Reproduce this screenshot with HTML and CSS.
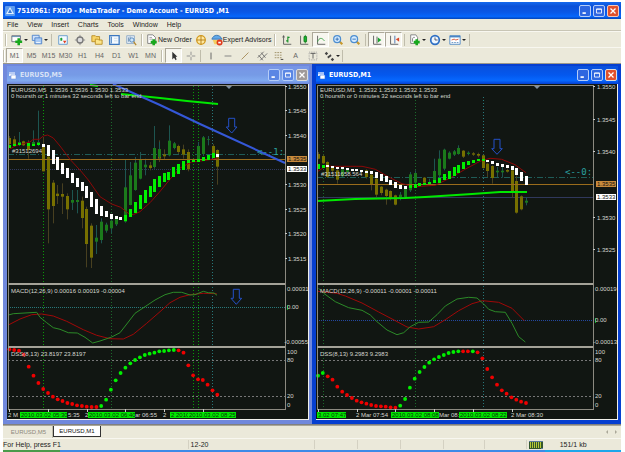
FILE: index.html
```html
<!DOCTYPE html>
<html lang="en">
<head>
<meta charset="utf-8">
<title>MetaTrader</title>
<link rel="stylesheet" href="styles.css">
</head>
<body>
<div class="app">
  <header class="titlebar">
    <svg class="logo" viewBox="0 0 10 10"><rect width="10" height="10" rx="1" fill="#5d9cf0"/><path d="M5 1L9 8H1Z" fill="#dff0ff"/><path d="M5 3L7 7H3Z" fill="#3a78d8"/></svg>
    <h1>7510961: FXDD - MetaTrader - Demo Account - EURUSD ,M1</h1>
    <div class="winbtns">
      <button aria-label="Minimize"><svg viewBox="0 0 12 12"><path d="M3 8.500h4" stroke="#fff" stroke-width="2"/></svg></button>
      <button aria-label="Restore"><svg viewBox="0 0 12 12"><path d="M3 3.500h6v5H3zM3 4h6" stroke="#fff" fill="none"/></svg></button>
      <button class="close" aria-label="Close"><svg viewBox="0 0 12 12"><path d="M3 3l6 6M9 3l-6 6" stroke="#fff" stroke-width="1.500"/></svg></button>
    </div>
  </header>
  <nav class="menu">
    <button>File</button><button>View</button><button>Insert</button><button>Charts</button><button>Tools</button><button>Window</button><button>Help</button>
  </nav>
  <div class="toolbar">
    <i class="grip"></i>
    <button class="drop" aria-label="New chart"><svg viewBox="0 0 14 14"><path d="M1 2h10v7H1z" fill="#fff" stroke="#667"/><path d="M1 3h10" stroke="#58a"/><path d="M9 5v8M5 9h8" stroke="#17a81c" stroke-width="3"/></svg></button>
    <button class="drop" aria-label="Profiles"><svg viewBox="0 0 14 14"><path d="M1.500 1.500h8v6h-8z" fill="#cfe2fa" stroke="#4a7fc8"/><path d="M4.500 4.500h8v7h-8z" fill="#a9cbf5" stroke="#4a7fc8"/><path d="M6 10h5" stroke="#fff"/></svg></button>
    <i class="sep"></i>
    <button aria-label="Market watch"><svg viewBox="0 0 14 14"><path d="M2 2h10v10H2z" fill="#f4faff" stroke="#5a93cc"/><path d="M3 6l2-2 2 2zM4 6h2v2H4z" fill="#18a030"/><path d="M7 8h4l-2 3z" fill="#e04020"/></svg></button>
    <button aria-label="Data window"><svg viewBox="0 0 14 14"><path d="M7 1v12M1 7h12" stroke="#888"/><circle cx="7" cy="7" r="3.500" fill="#ddd" stroke="#777" stroke-width="1.500"/></svg></button>
    <button aria-label="Navigator"><svg viewBox="0 0 14 14"><path d="M1 2h4l1 1h4v6H1z" fill="#f8d568" stroke="#b68a20"/><path d="M5 6h3l1 1h4v5H5z" fill="#fce58a" stroke="#b68a20"/></svg></button>
    <button aria-label="Terminal"><svg viewBox="0 0 14 14"><path d="M2 2h11v10H2z" fill="#f4faff" stroke="#3c78c0" stroke-width="1.500"/><path d="M4 3v8" stroke="#3c78c0"/><path d="M7 5h4M7 8h4" stroke="#c9d8e8"/></svg></button>
    <button aria-label="Strategy tester"><svg viewBox="0 0 14 14"><path d="M2 2h9v9H2z" fill="#e6eff8" stroke="#8ba7c4"/><path d="M4 4v5M6 3v6" stroke="#68a"/><circle cx="8" cy="7" r="2.500" fill="#cfe6fa" stroke="#4a80b8"/><path d="M10 9l3 4" stroke="#b78a30" stroke-width="1.500"/></svg></button>
    <i class="grip"></i>
    <button class="wide"><svg viewBox="0 0 14 14"><path d="M2 1h6l3 3v7H2z" fill="#fff" stroke="#777"/><path d="M4 4h3M4 6h4" stroke="#999"/><path d="M9 6v7M5.500 9.500h7" stroke="#17a81c" stroke-width="3"/></svg>New Order</button>
    <button aria-label="MetaEditor"><svg viewBox="0 0 14 14"><circle cx="7" cy="7" r="5" fill="#ffe9a0" stroke="#d39a20" stroke-width="1.500"/><path d="M7 2v10M2 7h10" stroke="#b07810"/></svg></button>
    <button class="wide"><svg viewBox="0 0 14 14"><path d="M1 6c2-6 9-6 12 0z" fill="#61a8e8" stroke="#3471b0"/><path d="M2 7h9l-2 5H4z" fill="#f4cf62"/><circle cx="10" cy="10" r="3.500" fill="#e03a1c"/><path d="M8.500 9h3v2h-3z" fill="#fff"/></svg>Expert Advisors</button>
    <i class="grip"></i>
    <button aria-label="Bar chart"><svg viewBox="0 0 14 14"><path d="M3 2v10h9M3 2L2 4M3 2l1 2" stroke="#555" fill="none"/><path d="M8 3v7M8 4h2M6 8h2" stroke="#189028" stroke-width="1.300"/></svg></button>
    <button aria-label="Candlesticks"><svg viewBox="0 0 14 14"><path d="M3 2v10h9" stroke="#555" fill="none"/><path d="M8.500 1v10" stroke="#189028"/><path d="M7 3h3v6H7z" fill="#19b62c" stroke="#117a1c"/></svg></button>
    <button class="on" aria-label="Line chart"><svg viewBox="0 0 14 14"><path d="M3 2v10h9" stroke="#555" fill="none"/><path d="M3 9c2-5 5-5 8-1" stroke="#2e9c3c" fill="none"/></svg></button>
    <button aria-label="Zoom in"><svg viewBox="0 0 14 14"><path d="M8 8l4 4" stroke="#c8992c" stroke-width="2.500"/><circle cx="6" cy="6" r="4" fill="#d4ebff" stroke="#4d8ed0" stroke-width="1.500"/><path d="M4 6h4M6 4v4" stroke="#2a68b0"/></svg></button>
    <button aria-label="Zoom out"><svg viewBox="0 0 14 14"><path d="M8 8l4 4" stroke="#c8992c" stroke-width="2.500"/><circle cx="6" cy="6" r="4" fill="#d4ebff" stroke="#4d8ed0" stroke-width="1.500"/><path d="M4 6h4" stroke="#2a68b0"/></svg></button>
    <i class="sep"></i>
    <button class="on" aria-label="Auto scroll"><svg viewBox="0 0 14 14"><path d="M3 2v10h9M7 3v8" stroke="#555" fill="none"/><path d="M8 4l4 3-4 3z" fill="#19a32c"/></svg></button>
    <button class="on" aria-label="Chart shift"><svg viewBox="0 0 14 14"><path d="M3 2v10h9" stroke="#555" fill="none"/><path d="M8 2v9" stroke="#3a6bb0"/><path d="M13 4L9 6l4 3z" fill="#d8482a"/></svg></button>
    <i class="sep"></i>
    <button class="drop" aria-label="Indicators"><svg viewBox="0 0 14 14"><path d="M2 1h6l2 3v7H2z" fill="#fff" stroke="#777"/><path d="M4 9c0-6 1-5 3-5" stroke="#777" fill="none"/><path d="M9 6v7M5.500 9.500h7" stroke="#17a81c" stroke-width="3"/></svg></button>
    <button class="drop" aria-label="Periods"><svg viewBox="0 0 14 14"><circle cx="7" cy="7" r="5" fill="#eef7ff" stroke="#2e6fc4" stroke-width="2"/><path d="M7 4v3h3" stroke="#445" fill="none"/></svg></button>
    <button class="drop" aria-label="Templates"><svg viewBox="0 0 14 14"><path d="M1 2h12v10H1z" fill="#fff" stroke="#4a85c4"/><path d="M1 3h12" stroke="#4a85c4" stroke-width="2"/><path d="M3 7l3-1 2 1 3-1" stroke="#d04828" fill="none"/><path d="M3 10h8" stroke="#58b" stroke-dasharray="2 1"/></svg></button>
    <i class="sep"></i>
  </div>
  <div class="toolbar periods">
    <i class="grip"></i>
    <button class="on">M1</button><button>M5</button><button>M15</button><button>M30</button><button>H1</button><button>H4</button><button>D1</button><button>W1</button><button>MN</button>
    <i class="grip"></i>
    <button class="on" aria-label="Cursor"><svg viewBox="0 0 14 14"><path d="M5 2v9l2-2 2 3 1-1-1-3h2z" fill="#333"/></svg></button>
    <button aria-label="Crosshair"><svg viewBox="0 0 14 14"><path d="M7 2v4M7 8v4M2 7h4M8 7h4" stroke="#888"/></svg></button>
    <i class="sep"></i>
    <button aria-label="Vertical line"><svg viewBox="0 0 14 14"><path d="M7 3v8" stroke="#555"/></svg></button>
    <button aria-label="Horizontal line"><svg viewBox="0 0 14 14"><path d="M3 7h8" stroke="#777"/></svg></button>
    <button aria-label="Trendline"><svg viewBox="0 0 14 14"><path d="M3 11l8-8" stroke="#a08550"/></svg></button>
    <button aria-label="Channel"><svg viewBox="0 0 14 14"><path d="M2 9l7-7M5 12l8-8M3 6l5 6M6 3l5 6" stroke="#666"/></svg></button>
    <button aria-label="Fibonacci"><svg viewBox="0 0 14 14"><path d="M2 3h9M2 6h9M2 9h9" stroke="#998a60" stroke-dasharray="2 1"/><path d="M9 11h3" stroke="#333"/></svg></button>
    <button>A</button>
    <button aria-label="Text label"><svg viewBox="0 0 14 14"><path d="M2.500 2.500h9v9h-9z" stroke="#999" stroke-dasharray="1 1" fill="none"/><path d="M4 4h6M7 4v6" stroke="#555"/></svg></button>
    <button class="drop" aria-label="Arrows"><svg viewBox="0 0 14 14"><path d="M2 4l2-2 2 2-2 2zM5 8l4-3 1 2-4 3zM9 11l2-2 2 2-2 2z" fill="#444"/></svg></button>
    <i class="sep"></i>
  </div>
  <main class="workspace">
    <section class="win">
      <div class="wtitle">
        <svg class="wicon" viewBox="0 0 9 9"><path d="M1 1h6v4H1z" fill="#e6efff"/><path d="M3 4h5v4H3z" fill="#fff" stroke="#7695dc" stroke-width=".6"/><path d="M1 2h6" stroke="#8aa6e8"/></svg>
        <h2>EURUSD,M5</h2>
        <div class="winbtns">
          <button aria-label="Minimize"><svg viewBox="0 0 12 12"><path d="M3 8.500h4" stroke="#fff" stroke-width="2"/></svg></button>
          <button aria-label="Maximize"><svg viewBox="0 0 12 12"><path d="M3 3.500h6v5H3zM3 4h6" stroke="#fff" fill="none"/></svg></button>
          <button class="close" aria-label="Close"><svg viewBox="0 0 12 12"><path d="M3 3l6 6M9 3l-6 6" stroke="#fff" stroke-width="1.500"/></svg></button>
        </div>
      </div>
      <svg class="chart" id="m5" viewBox="7 84 301 335"></svg>
    </section>
    <section class="win active">
      <div class="wtitle">
        <svg class="wicon" viewBox="0 0 9 9"><path d="M1 1h6v4H1z" fill="#e6efff"/><path d="M3 4h5v4H3z" fill="#fff" stroke="#2c6ae0" stroke-width=".6"/><path d="M1 2h6" stroke="#5a8cf0"/></svg>
        <h2>EURUSD,M1</h2>
        <div class="winbtns">
          <button aria-label="Minimize"><svg viewBox="0 0 12 12"><path d="M3 8.500h4" stroke="#fff" stroke-width="2"/></svg></button>
          <button aria-label="Maximize"><svg viewBox="0 0 12 12"><path d="M3 3.500h6v5H3zM3 4h6" stroke="#fff" fill="none"/></svg></button>
          <button class="close" aria-label="Close"><svg viewBox="0 0 12 12"><path d="M3 3l6 6M9 3l-6 6" stroke="#fff" stroke-width="1.500"/></svg></button>
        </div>
      </div>
      <svg class="chart" id="m1" viewBox="316 84 301 335"></svg>
    </section>
  </main>
  <div class="tabs">
    <button>EURUSD,M5</button><button class="current">EURUSD,M1</button>
    <span class="scroll"><i class="left"></i><i class="right"></i></span>
  </div>
  <footer class="status">
    <span class="help">For Help, press F1</span><span class="profile">12-20</span><span></span><span></span><span></span><span></span><span></span>
    <span class="net"><svg viewBox="0 0 14 8"><rect width="14" height="8" fill="#34562c"/><path d="M1.500 1v6M3.500 1v6M5.500 1v6M7.500 1v6M9.500 1v6M11.500 1v6" stroke="#b5c938"/><path d="M0 .5h14M12 7.500h2" stroke="#5a7a9a"/></svg>151/1 kb</span>
  </footer>
  <div class="taskbar"><i></i><b></b></div>
</div>
<script src="chart.js"></script>
</body>
</html>
```
FILE: styles.css
```css
* { box-sizing: border-box; }
body { margin: 0; background: #fff; font: 7px/10px "Liberation Sans", Arial, sans-serif; color: #222; }
button { font: inherit; color: inherit; background: none; border: 0; margin: 0; padding: 0; }
h1, h2 { margin: 0; }
svg { display: block; flex: none; }
.app { display: flex; flex-direction: column; min-height: 100vh; padding: 2px 4px 0 3px; }

.titlebar { display: flex; align-items: center; height: 17px; padding: 0 2px; gap: 2px; background: linear-gradient(#1469ee, #0a50d8 25%, #0a58e6 60%, #0666fb 85%, #0445b8); }
.titlebar h1, .wtitle h2 { font: bold 7px/14px "DejaVu Sans Condensed", "DejaVu Sans", sans-serif; color: #fff; flex: 1; white-space: nowrap; }
.logo { width: 10px; height: 10px; }
.winbtns { display: flex; gap: 2px; }
.winbtns button { width: 12px; height: 12px; border: 1px solid #b5cdf8; border-radius: 2px; background: #2e66e0; }
.winbtns svg { width: 10px; height: 10px; }
.winbtns .close { background: #e0512c; border-color: #f4c8ba; }

.menu { display: flex; height: 12px; align-items: center; background: #ebe9da; border-bottom: 1px solid #c8c5b5; }
.menu button { padding: 0 5px 0 4px; }

.toolbar { display: flex; align-items: center; height: 16px; background: #ebe9da; border-top: 1px solid #f8f7f0; }
.toolbar svg { width: 12px; height: 12px; }
.toolbar button { width: 17px; height: 15px; display: flex; align-items: center; justify-content: center; flex: none; }
.toolbar button.wide { width: auto; padding: 0 1px; gap: 0; white-space: nowrap; }
.toolbar .drop { width: 20px; gap: 1px; }
.toolbar .drop::after { content: ""; border: 2px solid transparent; border-top-color: #222; border-bottom: 0; }
.toolbar .on { background: #f7f6ef; border: 1px solid #aca899; border-right-color: #fff; border-bottom-color: #fff; }
.grip, .sep { width: 1px; height: 12px; margin: 0 2px; background: #c0bdac; flex: none; }
.grip { width: 2px; border-right: 1px solid #fff; }
.periods { height: 17px; border-bottom: 1px solid #9a978a; color: #666; }
.periods .grip { margin: 0 1px 0 0; }
.periods .grip ~ .grip { margin: 0 2px; }
.periods .sep { margin: 0 1px; }

.workspace { display: grid; grid-template-columns: 1fr 1fr; align-items: start; flex: 1; background: #808080; }
.win { border: 4px solid #7088dc; border-width: 2px 3px 4px 4px; background: #7088dc; }
.win.active { border-color: #063fd0; background: #063fd0; }
.wtitle { display: flex; align-items: center; height: 18px; gap: 3px; padding: 0 1px; background: linear-gradient(#7795e6, #769be6 50%, #80aaf0 80%, #7088dc); }
.active .wtitle { background: linear-gradient(#0a50dc, #0458ee 50%, #0668ff 80%, #063fd0); }
.wicon { width: 9px; height: 9px; }
.wtitle h2 { color: #d8e2f6; }
.active .wtitle h2 { color: #fff; }
.win .winbtns button { background: #5a86e4; }
.win .winbtns .close { background: #a09a98; border-color: #ddd; }
.win.active .winbtns button { background: #2e66e0; }
.win.active .winbtns .close { background: #e0512c; }
.chart { width: 100%; height: auto; background: #111612; border: solid #f0f0ea; border-width: 0 1px 1px 0; font: 6px "Liberation Sans", Arial, sans-serif; }
.chart text { fill: #d6d6d0; white-space: pre; }
.chart .note { fill: #2aa0a0; font: 9px "DejaVu Sans Mono", monospace; }
.chart .end { text-anchor: end; }
.chart .dark { fill: #0a300a; }
.chart .ink { fill: #111; }

.tabs { display: flex; height: 13px; background: #ebe9da; border-top: 1px solid #aaa798; padding-left: 2px; font-size: 6px; color: #8b887a; }
.tabs button { width: 48px; border-right: 1px solid #c0bdac; }
.tabs .current { background: #fff; color: #111; border: 1px solid #333; border-top: 0; height: 11px; }
.scroll { margin-left: auto; display: flex; gap: 7px; align-items: center; padding-right: 4px; }
.scroll i { border: 2px solid transparent; }
.scroll .left { border-right-color: #aaa798; border-left: 0; }
.scroll .right { border-left-color: #aaa798; border-right: 0; }
.status { display: grid; grid-template-columns: 185fr 126fr 43fr 43fr 43fr 40fr 42fr 94fr; height: 12px; align-items: center; background: #ebe9da; border-top: 1px solid #f8f7f0; }
.status span { height: 9px; line-height: 9px; border-right: 1px solid #d4d1c2; white-space: nowrap; }
.status .net { display: flex; align-items: center; gap: 17px; padding-left: 2px; border: 0; }
.profile { padding-left: 2px; }
.net svg { width: 14px; height: 8px; }
.taskbar { display: flex; height: 2px; background: #3c8ae8; }
.taskbar i { width: 57px; background: #4a9a4a; }
.taskbar b { margin-left: auto; width: 76px; background: #1ea6ea; }
```
FILE: chart.js
```javascript
// Points are stored in thirds of a pixel, relative to the origin [ox, oy] of their block.
const G = '#00f000', R = '#f00000', OLIVE = '#777000', LEAF = '#1b7a1b', TEAL = '#28787a';

const charts = {
  m5: {
    left: 8, axis: 285, labelX: 288, zero: 307, zeroColor: '#28787a',
    title: 'EURUSD,M5  1.3536 1.3536 1.3530 1.3533',
    timer: '0 hoursth or 1 minutes 32 seconds left to bar end',
    order: ['#31512694', 12, 153], dash: 154, bid: 159, ask: 169,
    prices: [['1.3550', 86], ['1.3545', 110], ['1.3540', 135], ['1.3530', 184], ['1.3525', 209], ['1.3520', 233], ['1.3515', 258]],
    macd: 'MACD(12,26,9) 0.00016 0.00019 -0.00004', macdAxis: [['0.00031', 289], ['0.00', 307], ['-0.00055', 342]],
    dss: 'DSS(8,13) 23.8197 23.8197', note: ['<--1:', 257, 155],
    verticals: [[43, '#0a9a0a'], [111, '#1c6a2c'], [193, '#0a9a0a'], [198, '#0a9a0a'], [212, TEAL]],
    marker: 229,
    trend: [['#00e800', 2, [[90, 85], [98, 86]]], ['#00e800', 2, [[121, 94], [160, 98], [187, 101], [218, 104]]], ['#3558d8', 2, [[113, 84], [160, 105], [200, 124], [285, 163]]]],
    arrows: [[155, 62, [[221, 169], [239, 169], [239, 195], [246, 195], [230, 213], [214, 195], [221, 195]]], [0, 280, [[700, 28], [718, 28], [718, 55], [725, 55], [709, 73], [693, 55], [700, 55]]]],
    ma: [[0, 62, [[28, 262], [50, 250], [70, 245], [90, 240], [100, 232], [118, 232], [130, 222], [143, 219], [160, 228], [180, 252], [210, 292], [245, 330], [265, 354], [300, 404], [335, 426], [362, 436], [385, 454], [400, 458], [420, 449], [450, 422], [478, 391], [510, 352], [540, 318], [575, 300], [610, 296], [645, 290], [655, 290]]]],
    candles: [
      [0, 62, [[28, 228, 246, 0, 222, 250], [42, 232, 250, 0, 222, 252], [57, 240, 248, 1, 210, 252], [71, 238, 250, 0, 236, 252], [86, 244, 264, 0, 235, 290], [101, 240, 247, 1, 205, 250], [115, 240, 248, 1, 146, 252], [130, 250, 328, 0, 225, 328], [391, 340, 429, 1, 300, 430], [406, 302, 384, 1, 285, 386], [421, 292, 350, 1, 270, 352], [435, 308, 316, 1, 290, 340], [450, 310, 318, 0, 300, 325], [464, 258, 315, 1, 192, 320], [478, 262, 290, 0, 235, 300]]],
      [0, 180, [[144, -70, 88, 0, -75, 190], [159, 8, 78, 0, 0, 130], [173, 41, 48, 0, 15, 72], [188, 42, 50, 0, 10, 102], [202, 48, 88, 0, 40, 118], [217, 60, 68, 1, 30, 90], [232, 60, 66, 1, 30, 100], [246, 62, 114, 0, 50, 145], [260, 87, 192, 0, 80, 262], [275, 137, 233, 0, 130, 264], [290, 173, 185, 1, 135, 222], [304, 125, 180, 1, 115, 190], [319, 134, 152, 1, 128, 158], [333, 122, 145, 1, 116, 160], [348, 113, 133, 1, 108, 138], [376, 22, 125, 1, -60, 128]]],
      [155, 62, [[13, 262, 285, 1, 240, 290], [28, 277, 283, 0, 262, 293], [43, 236, 280, 1, 190, 283], [57, 244, 258, 1, 240, 262], [71, 252, 270, 0, 248, 276], [85, 262, 278, 0, 248, 290], [100, 270, 322, 0, 262, 328], [130, 252, 295, 1, 240, 298], [145, 226, 276, 1, 222, 282], [159, 232, 234, 1, 222, 250], [174, 252, 285, 0, 246, 288], [188, 264, 314, 0, 262, 368]]]
    ],
    bodies: [
      [0, 62, [[28, 249, 257, 1], [42, 245, 250, 1], [57, 244, 250, 1], [86, 242, 250, 1], [101, 246, 250, 1], [115, 243, 249, 1], [130, 246, 256, 0], [144, 250, 282, 0], [159, 264, 306, 0], [173, 285, 325, 0], [188, 304, 336, 0], [202, 318, 348, 0], [217, 333, 364, 0]]],
      [0, 180, [[232, -6, 20, 0], [246, 5, 32, 0], [260, 17, 53, 0], [275, 36, 80, 0], [290, 57, 101, 0], [304, 78, 107, 0], [319, 93, 112, 0], [333, 101, 115, 0], [348, 107, 117, 0], [362, 110, 119, 0], [376, 104, 122, 1], [391, 87, 111, 1], [406, 66, 100, 1], [421, 45, 88, 1], [435, 30, 68, 1], [450, 18, 52, 1], [464, 3, 35, 1]]],
      [155, 62, [[-2, 350, 387, 1], [13, 342, 374, 1], [27, 334, 360, 1], [41, 330, 355, 1], [56, 316, 345, 1], [71, 305, 335, 1], [85, 298, 325, 1], [100, 294, 303, 1], [115, 295, 301, 1], [130, 290, 300, 1], [145, 285, 297, 1], [159, 278, 292, 1], [174, 274, 288, 1], [188, 276, 284, 0]]]
    ],
    ox: 0,
    fast: [[25, 105], [40, 101], [110, 97], [120, 112], [140, 128], [160, 143], [180, 148], [205, 158], [232, 159], [255, 172], [278, 189], [300, 183], [315, 178], [335, 171], [360, 158], [378, 135], [405, 100], [435, 80], [465, 60], [495, 44], [520, 37], [545, 37], [570, 45], [585, 44], [610, 34], [625, 38], [642, 39], [651, 46]],
    slow: [[25, 135], [60, 117], [95, 104], [125, 102], [160, 108], [200, 124], [250, 149], [290, 166], [330, 176], [370, 177], [400, 163], [440, 130], [480, 95], [510, 68], [540, 52], [570, 44], [610, 40], [650, 41]],
    dotX: 28, dots: 'r208 r210 r212 r224 r260 r287 r309 r327 r339 r350 r358 r363 r369 r372 r376 r378 r380 r381 r381 g378 g359 g329 g301 g279 g263 g250 g240 g232 g225 g221 g218 g214 g213 g211 g210 r211 r218 r256 r286 r298 r300 r314 r331 r344',
    times: [['2 M', 8], ['5:35', 68], ['2', 85], ['ar 06:55', 135], ['2', 163]],
    marks: [[20, 47, '2010.03.02 05:30'], [88, 47, '2010.03.02 06:40'], [170, 66, '2 2010'], [188, 48, '2010.03.02 08:25']],
    ticks: [9, 48, 87, 125, 164, 203]
  },
  m1: {
    left: 317, axis: 593, labelX: 597, zero: 320, zeroColor: '#2448a0',
    title: 'EURUSD,M1  1.3532 1.3533 1.3532 1.3533',
    timer: '0 hoursth or 0 minutes 32 seconds left to bar end',
    order: ['#31511658.564', 321, 176], dash: 177, bid: 184, ask: 197,
    prices: [['1.3550', 86], ['1.3545', 119], ['1.3540', 151], ['1.3530', 217], ['1.3525', 249]],
    macd: 'MACD(12,26,9) -0.00011 -0.00001 -0.00011', macdAxis: [['0.00019', 289], ['0.00', 320], ['-0.00013', 342]],
    dss: 'DSS(8,13) 9.2983 9.2983', note: ['<--0:', 565, 175],
    verticals: [[323, '#1c6a2c'], [415, '#1c6a2c'], [483, TEAL]],
    marker: 537,
    trend: [['#00e800', 2, [[317, 201], [355, 199], [405, 198], [425, 197], [472, 194], [500, 192], [527, 192]]]],
    arrows: [[465, 62, [[87, 232], [105, 232], [105, 260], [112, 260], [96, 277], [80, 260], [87, 260]]]],
    ma: [[312, 62, [[18, 328], [40, 313], [150, 313], [190, 322], [230, 345], [270, 365], [310, 374], [370, 370], [420, 345], [459, 322], [504, 298], [534, 289], [569, 292], [609, 308], [642, 332]]]],
    candles: [
      [312, 62, [[18, 276, 290, 0, 270, 292], [33, 282, 304, 0, 278, 306], [47, 300, 345, 0, 298, 348], [62, 315, 326, 0, 312, 345], [76, 325, 353, 0, 320, 365], [91, 322, 343, 1, 318, 346], [105, 320, 330, 1, 318, 334], [163, 325, 345, 0, 322, 350], [178, 338, 368, 0, 335, 385], [193, 350, 398, 0, 348, 405], [207, 374, 393, 0, 372, 400], [222, 383, 402, 0, 380, 428], [236, 387, 410, 0, 385, 415], [251, 400, 428, 0, 398, 430], [266, 398, 408, 1, 390, 415], [280, 380, 405, 1, 375, 410], [295, 337, 385, 1, 330, 390], [310, 333, 362, 1, 325, 366], [338, 347, 362, 0, 345, 366], [353, 360, 364, 1, 350, 368], [367, 327, 360, 1, 290, 362], [382, 290, 340, 1, 265, 345], [397, 263, 320, 1, 260, 325], [411, 272, 290, 1, 268, 292], [426, 268, 278, 1, 264, 282], [440, 258, 276, 1, 250, 278], [455, 266, 284, 0, 264, 288], [470, 272, 276, 1, 268, 280]]],
      [465, 62, [[25, 274, 278, 0, 270, 282], [40, 276, 281, 0, 272, 286], [54, 280, 318, 0, 278, 320], [68, 305, 327, 0, 302, 345], [82, 312, 348, 0, 310, 365], [97, 326, 331, 1, 315, 345], [112, 326, 331, 1, 315, 347], [126, 324, 329, 0, 320, 332], [141, 325, 387, 0, 322, 408], [155, 357, 452, 0, 340, 455], [170, 403, 442, 0, 400, 445], [184, 416, 422, 1, 405, 430]]]
    ],
    bodies: [
      [312, 62, [[18, 305, 320, 1], [33, 308, 318, 1], [47, 309, 315, 0], [62, 312, 318, 0], [76, 314, 321, 0], [91, 316, 323, 0], [105, 318, 324, 0], [120, 320, 325, 0], [134, 321, 326, 0], [149, 324, 328, 0], [163, 326, 331, 0], [178, 327, 336, 0], [193, 330, 348, 0], [207, 335, 356, 0], [222, 343, 362, 0], [236, 353, 369, 0], [251, 360, 378, 0], [266, 369, 380, 0], [280, 371, 381, 0], [295, 370, 378, 1], [310, 366, 377, 1], [323, 364, 372, 1], [338, 362, 369, 1], [353, 360, 366, 1], [367, 355, 365, 1], [382, 347, 362, 1], [397, 336, 355, 1], [411, 327, 350, 1], [426, 315, 342, 1], [440, 308, 333, 1], [455, 301, 322, 1]]],
      [465, 62, [[10, 298, 310, 1], [25, 294, 303, 1], [40, 292, 298, 1], [54, 291, 298, 1], [68, 293, 300, 0], [82, 297, 307, 0], [97, 302, 310, 0], [112, 305, 313, 0], [126, 308, 318, 0], [141, 312, 323, 0], [155, 318, 340, 0], [170, 330, 358, 0], [184, 342, 370, 0]]]
    ],
    ox: 312,
    fast: [[20, 25], [35, 40], [70, 65], [110, 83], [150, 91], [175, 105], [195, 125], [225, 150], [255, 164], [275, 158], [295, 140], [320, 127], [350, 126], [375, 104], [400, 78], [435, 57], [470, 52], [495, 54], [515, 72], [530, 88], [550, 95], [580, 97], [600, 130], [620, 170], [640, 186]],
    slow: [[18, 34], [75, 40], [100, 48], [150, 69], [200, 96], [250, 122], [285, 141], [320, 147], [365, 140], [400, 119], [440, 92], [480, 71], [512, 62], [560, 67], [600, 85], [637, 122]],
    dotX: 18, dots: 'g287 g279 r289 r299 r320 r335 r345 r354 r362 r367 r371 r375 r378 r379 r380 r382 r383 g377 g357 g323 g296 g276 g261 g248 g238 g231 g225 g219 g216 g214 r214 r214 g214 r217 r235 r267 r292 r314 r331 r341 r352 r359 r365 r369',
    times: [['2 Mar 07:54', 356], ['Mar 08:', 439], ['2 Mar 08:30', 511]],
    marks: [[317, 29, '3.02 07:47'], [391, 48, '2010.03.02 08:08'], [459, 48, '2010.03.02 08:22']],
    ticks: [318, 357, 395, 434, 473, 512]
  }
};

function draw(id, c) {
  const out = [];
  const pt = (ox, oy) => p => (ox + p[0] / 3).toFixed(1) + ',' + (oy + p[1] / 3).toFixed(1);
  const line = (x1, y1, x2, y2, col, dash, w) => out.push(`<path d="M${x1} ${y1}L${x2} ${y2}" stroke="${col}" stroke-width="${w || 1}"${dash ? ` stroke-dasharray="${dash}"` : ''}/>`);
  const poly = (pts, col, w) => out.push(`<polyline points="${pts}" fill="none" stroke="${col}" stroke-width="${w || 1}"/>`);
  const rect = (x, y, w, h, col) => out.push(`<rect x="${x}" y="${y}" width="${w}" height="${h}" fill="${col}"/>`);
  const text = (s, x, y, cls) => out.push(`<text x="${x}" y="${y}"${cls ? ` class="${cls}"` : ''}>${s.replace('<', '&lt;')}</text>`);

  c.verticals.forEach(v => line(v[0] + .5, id === 'm5' ? 86 : 97, v[0] + .5, 408, v[1], '1 2'));
  line(c.left, c.dash + .5, c.axis, c.dash + .5, '#1f5c58', '6 2 1 2');
  line(c.left, c.ask + .5, c.axis, c.ask + .5, '#30385c', id === 'm5' ? '1 1' : '');
  line(c.left, c.zero + .5, c.axis, c.zero + .5, c.zeroColor, '1 1');
  [360.5, 396.5].forEach(y => line(c.left, y, c.axis, y, '#777', '2 2'));

  c.candles.forEach(([ox, oy, list]) => list.forEach(([x, a, b, up, hi, lo]) => {
    const px = Math.floor(ox + x / 3);
    rect(px, oy + hi / 3, 1, (lo - hi) / 3, up ? '#1d5550' : '#484020');
    rect(px - 1, oy + a / 3, 3, (b - a) / 3, up ? LEAF : OLIVE);
  }));
  line(c.left, c.bid + .5, c.axis, c.bid + .5, '#9a6c1c');
  c.ma.forEach(([ox, oy, pts]) => poly(pts.map(pt(ox, oy)).join(' '), '#8c0808'));
  c.bodies.forEach(([ox, oy, list]) => list.forEach(([x, a, b, up]) =>
    rect(Math.floor(ox + x / 3) - 1, Math.round(oy + a / 3), 3, Math.max(2, Math.round((b - a) / 3)), up ? G : '#fff')));
  c.trend.forEach(([col, w, pts]) => poly(pts.join(' '), col, w));
  c.arrows.forEach(([ox, oy, pts]) => out.push(`<polygon points="${pts.map(pt(ox, oy)).join(' ')}" fill="none" stroke="#2450c8"/>`));

  poly(c.slow.map(pt(c.ox, 280)).join(' '), '#a00808');
  poly(c.fast.map(pt(c.ox, 280)).join(' '), '#2c8a28');
  c.dots.split(' ').forEach((d, i) => out.push(`<circle cx="${(c.ox + (c.dotX + i * 14.51) / 3).toFixed(1)}" cy="${(280 + d.slice(1) / 3).toFixed(1)}" r="1.9" fill="${d[0] === 'g' ? G : R}"/>`));

  out.push(`<path d="M${c.left + .5} 410V85.500H${c.axis}M${c.left} 409.500H${c.axis}M${c.axis + .5} 85V410" fill="none" stroke="#8c8a80"/>`);
  [284, 347].forEach(y => line(c.left, y, c.axis, y, '#a4a298', '', 2));
  out.push(`<path d="M${c.marker - 3} 86h6l-3 3z" fill="#8090a0"/>`);
  c.ticks.forEach(x => rect(x, 409, 1, 3, '#ccc'));

  text(c.title, c.left + 3, 92);
  text(c.timer, c.left + 3, 98);
  text(...c.order);
  text(c.macd, c.left + 3, 293);
  text(c.dss, c.left + 3, 356);
  text(...c.note, 'note');
  c.prices.forEach(([s, y]) => { text(s, c.labelX, y + 3); rect(c.axis, y, 2, 1, '#ccc'); });
  rect(c.labelX - 1, c.bid - 3, 20, 6, '#c88a3c');
  text('1.3535', c.labelX, c.bid + 2, 'ink');
  rect(c.labelX - 1, c.ask - 3, 20, 6, '#fff');
  text('1.3533', c.labelX, c.ask + 2, 'ink');
  rect(c.axis + 2, c.zero - 2, 1, 5, '#18b018');
  const [top, zero, low] = c.macdAxis, right = id === 'm5' ? 308 : 617;
  text(top[0], c.axis + 2, top[1] + 2);
  text(zero[0], c.axis + 2, zero[1] + 2);
  text(low[0], right, low[1] + 2, 'end');
  [['100', 352], ['80', 360], ['20', 396], ['0', 405]].forEach(([s, y]) => text(s, c.axis + 2, y + 2));
  c.times.forEach(([s, x]) => text(s, x, 417));
  c.marks.forEach(([x, w, s]) => { rect(x, 412, w, 6, '#00e800'); text(s, x + 1, 417, 'dark'); });
  document.getElementById(id).innerHTML = out.join('');
}

for (const id in charts) draw(id, charts[id]);
```
